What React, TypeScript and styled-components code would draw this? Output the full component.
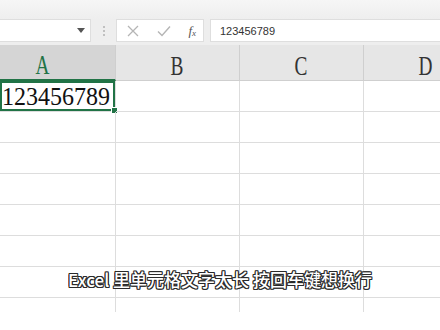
import styled, { createGlobalStyle } from "styled-components";

const GlobalStyle = createGlobalStyle`
  html, body {
    margin: 0;
    padding: 0;
    background: #ffffff;
  }
  body {
    font-family: "Liberation Sans", "Noto Sans CJK SC", sans-serif;
  }
`;

const columns = ["A", "B", "C", "D"];
const rowCount = 8;

const App = () => {
  return (
    <Page>
      <GlobalStyle />
      <TopStrip />
      <FormulaBar>
        <NameBox>
          <svg width="8" height="5" viewBox="0 0 8 5">
            <polygon points="0,0 8,0 4,5" fill="#555" />
          </svg>
        </NameBox>
        <Splitter>
          <Dot />
          <Dot />
          <Dot />
        </Splitter>
        <FxBox>
          <svg width="12" height="12" viewBox="0 0 12 12">
            <path d="M1 1 L11 11 M11 1 L1 11" stroke="#b5b5b5" strokeWidth="1.3" />
          </svg>
          <svg width="14" height="12" viewBox="0 0 14 12">
            <path d="M1 6.5 L5 10.5 L13 1.5" stroke="#b5b5b5" strokeWidth="1.4" fill="none" />
          </svg>
          <FxLabel>
            f<sub>x</sub>
          </FxLabel>
        </FxBox>
        <FormulaInput>123456789</FormulaInput>
      </FormulaBar>
      <Sheet>
        <Grid>
          {columns.map((c) => (
            <HeaderCell key={c} $selected={c === "A"}>
              <HeaderLabel>{c}</HeaderLabel>
            </HeaderCell>
          ))}
          {Array.from({ length: rowCount }).map((_, r) =>
            columns.map((c) => {
              const active = r === 0 && c === "A";
              return (
                <Cell key={`${c}${r}`} $active={active}>
                  {active && (
                    <>
                      <CellText>123456789</CellText>
                      <FillHandle />
                    </>
                  )}
                </Cell>
              );
            })
          )}
        </Grid>
      </Sheet>
      <Caption>Excel 里单元格文字太长 按回车键想换行</Caption>
    </Page>
  );
};

const Page = styled.div`
  position: relative;
  width: 440px;
  height: 330px;
  overflow: hidden;
  background: #ffffff;
`;

const TopStrip = styled.div`
  height: 19px;
  background: linear-gradient(#f6f6f6, #eeeeee);
`;

const FormulaBar = styled.div`
  display: flex;
  align-items: stretch;
  height: 23px;
  padding-bottom: 3px;
  background: #eeeeee;
`;

const NameBox = styled.div`
  width: 91px;
  display: flex;
  align-items: center;
  justify-content: flex-end;
  padding-right: 5px;
  box-sizing: border-box;
  background: #ffffff;
  border: 1px solid #dedede;
  border-left: none;
`;

const Splitter = styled.div`
  width: 25px;
  display: flex;
  flex-direction: column;
  align-items: center;
  justify-content: center;
  gap: 2px;
`;

const Dot = styled.span`
  width: 2px;
  height: 2px;
  border-radius: 50%;
  background: #b0b0b0;
`;

const FxBox = styled.div`
  width: 88px;
  display: flex;
  align-items: center;
  justify-content: space-between;
  padding: 0 7px 0 10px;
  box-sizing: border-box;
  background: #ffffff;
  border: 1px solid #dedede;
`;

const FxLabel = styled.span`
  font-family: "Liberation Serif", serif;
  font-style: italic;
  font-size: 13px;
  color: #555555;
  line-height: 1;

  & sub {
    font-size: 9px;
    vertical-align: -1px;
  }
`;

const FormulaInput = styled.div`
  flex: 1;
  margin-left: 6px;
  display: flex;
  align-items: center;
  padding-left: 9px;
  font-size: 11px;
  color: #333333;
  background: #ffffff;
  border: 1px solid #dedede;
  border-right: none;
`;

const Sheet = styled.div`
  height: 267px;
  overflow: hidden;
  background: #ffffff;
`;

const Grid = styled.div`
  display: grid;
  grid-template-columns: 116px 124px 124px 124px;
  grid-template-rows: 36px;
  grid-auto-rows: 31px;
  width: 488px;
`;

const HeaderCell = styled.div<{ $selected?: boolean }>`
  display: flex;
  align-items: center;
  justify-content: center;
  padding-right: ${(p) => (p.$selected ? "30px" : "0")};
  padding-top: 7px;
  box-sizing: border-box;
  font-family: "Liberation Serif", serif;
  font-size: 21px;
  color: ${(p) => (p.$selected ? "#217346" : "#333333")};
  background: ${(p) => (p.$selected ? "#d5d5d5" : "#e6e6e6")};
  border-right: 1px solid #cfcfcf;
  border-bottom: ${(p) => (p.$selected ? "2px solid #217346" : "1px solid #cfcfcf")};
`;

const HeaderLabel = styled.span`
  display: inline-block;
  transform: scale(0.92, 1.25);
`;

const Cell = styled.div<{ $active?: boolean }>`
  position: relative;
  display: flex;
  align-items: center;
  justify-content: flex-end;
  box-sizing: border-box;
  border-right: 1px solid #dddddd;
  border-bottom: 1px solid #dddddd;
  box-shadow: ${(p) => (p.$active ? "inset 0 0 0 2px #217346" : "none")};
`;

const CellText = styled.span`
  padding-right: 5px;
  font-family: "Liberation Serif", serif;
  font-size: 24px;
  color: #111111;
  transform: scaleY(1.08);
`;

const FillHandle = styled.span`
  position: absolute;
  right: -3px;
  bottom: -3px;
  width: 5px;
  height: 5px;
  background: #217346;
  border: 1px solid #ffffff;
`;

const Caption = styled.div`
  position: absolute;
  left: 0;
  right: 0;
  top: 270px;
  text-align: center;
  font-family: "Noto Sans CJK SC", "Noto Sans", sans-serif;
  font-size: 17px;
  font-weight: 500;
  line-height: 20px;
  color: #ffffff;
  transform: scaleY(1.05);
  text-shadow:
    1px 0 0 #2a2a2a,
    -1px 0 0 #2a2a2a,
    0 1px 0 #2a2a2a,
    0 -1px 0 #2a2a2a,
    1px 1px 0 #2a2a2a,
    -1px -1px 0 #2a2a2a,
    1px -1px 0 #2a2a2a,
    -1px 1px 0 #2a2a2a;
`;

export default App;
